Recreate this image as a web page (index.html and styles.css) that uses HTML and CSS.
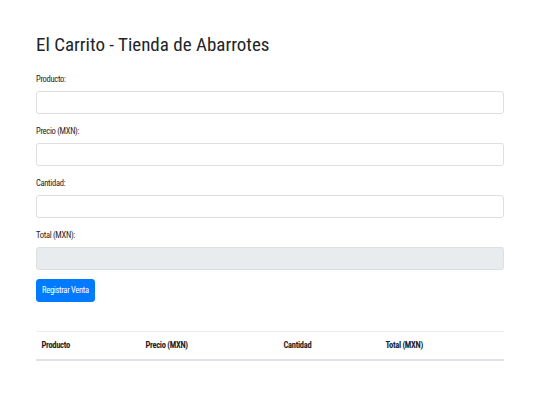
FILE: index.html
```html
<!DOCTYPE html>
<html lang="es">
<head>
    <meta charset="UTF-8">
    <meta name="viewport" content="width=device-width, initial-scale=1.0">
    <title>El Carrito - Tienda de Abarrotes</title>
    <link rel="stylesheet" href="styles.css">
</head>
<body>
    <div class="container">
        <h1>El Carrito - Tienda de Abarrotes</h1>
        <form id="ventaForm">
            <div class="form-group">
                <label for="producto">Producto:</label>
                <input type="text" class="form-control" id="producto">
            </div>
            <div class="form-group">
                <label for="precio">Precio (MXN):</label>
                <input type="number" class="form-control" id="precio">
            </div>
            <div class="form-group">
                <label for="cantidad">Cantidad:</label>
                <input type="number" class="form-control" id="cantidad">
            </div>
            <div class="form-group last">
                <label for="total">Total (MXN):</label>
                <input type="text" class="form-control" id="total" readonly>
            </div>
            <button type="submit" class="btn-primary">Registrar Venta</button>
        </form>

        <table class="table">
            <thead>
                <tr>
                    <th class="col-producto">Producto</th>
                    <th class="col-precio">Precio (MXN)</th>
                    <th class="col-cantidad">Cantidad</th>
                    <th>Total (MXN)</th>
                </tr>
            </thead>
            <tbody id="ventas"></tbody>
        </table>
    </div>
</body>
</html>
```

FILE: styles.css
```css
body {
    margin: 0;
    font-family: Roboto, "Liberation Sans", Arial, sans-serif;
    font-stretch: 75%;
    font-size: 8.5px;
    letter-spacing: -0.3px;
    line-height: 13.5px;
    color: #212529;
    background-color: #fff;
}
.container {
    width: 468px;
    margin: 0 auto;
    padding-top: 33px;
}
h1 {
    margin: 0 0 16px 0;
    font-size: 19px;
    font-weight: normal;
    letter-spacing: 0;
    line-height: 24px;
}
.form-group {
    margin-bottom: 11px;
}
.form-group.last {
    margin-bottom: 9px;
}
label {
    display: block;
    margin-bottom: 4.5px;
}
.form-control {
    display: block;
    box-sizing: border-box;
    width: 100%;
    height: 23px;
    margin: 0;
    padding: 2px 6px;
    font: inherit;
    color: #495057;
    background-color: #fff;
    border: 1px solid #dcdfe3;
    border-radius: 3px;
}
.form-control[readonly] {
    background-color: #e9ecef;
}
.btn-primary {
    display: block;
    height: 23px;
    padding: 0 5px;
    font: inherit;
    letter-spacing: inherit;
    color: #fff;
    background-color: #007bff;
    border: 1px solid #007bff;
    border-radius: 3px;
    cursor: pointer;
}
.btn-primary:hover {
    background-color: #0069d9;
}
.table {
    width: 100%;
    margin-top: 29px;
    border-collapse: collapse;
}
.table th {
    height: 27px;
    padding: 0 5.5px;
    text-align: left;
    font-weight: bold;
    border-top: 1px solid #e9ecef;
    border-bottom: 2px solid #dee2e6;
}
.col-producto {
    width: 93px;
}
.col-precio {
    width: 127px;
}
.col-cantidad {
    width: 91px;
}
```
